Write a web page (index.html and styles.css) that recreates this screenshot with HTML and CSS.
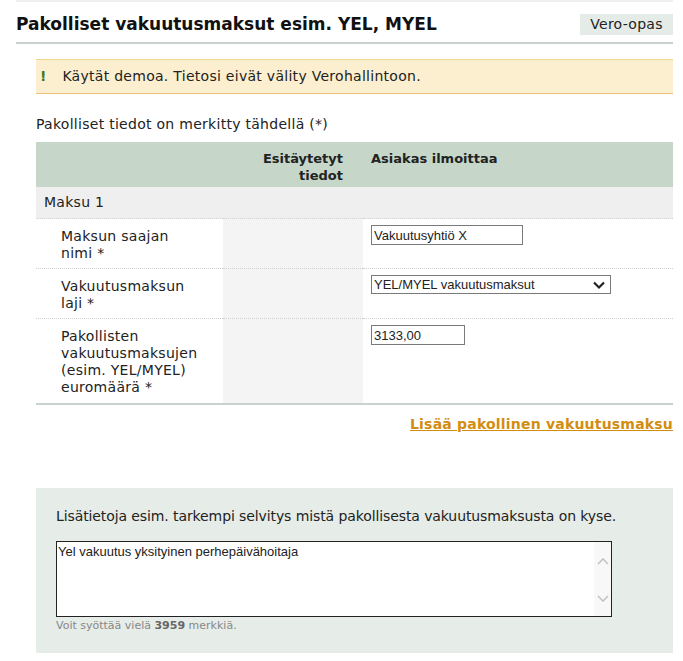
FILE: index.html
```html
<!DOCTYPE html>
<html lang="fi">
<head>
  <meta charset="UTF-8">
  <title>Pakolliset vakuutusmaksut</title>
  <link rel="stylesheet" href="styles.css">
</head>
<body>
  <div class="page">
    <div class="page-head">
      <h1>Pakolliset vakuutusmaksut esim. YEL, MYEL</h1>
      <a class="guide" href="#">Vero-opas</a>
    </div>

    <div class="content">
      <div class="notice"><span class="bang">!</span> Käytät demoa. Tietosi eivät välity Verohallintoon.</div>

      <p class="required-note">Pakolliset tiedot on merkitty tähdellä (*)</p>

      <table class="form-table">
        <colgroup>
          <col class="col-label">
          <col class="col-pre">
          <col class="col-own">
        </colgroup>
        <thead>
          <tr>
            <th></th>
            <th class="th-pre">Esitäytetyt tiedot</th>
            <th class="th-own">Asiakas ilmoittaa</th>
          </tr>
        </thead>
        <tbody>
          <tr class="group-row">
            <td colspan="3">Maksu 1</td>
          </tr>
          <tr class="field-row">
            <td class="label">Maksun saajan nimi *</td>
            <td class="pre"></td>
            <td class="own"><input class="text-input wide" type="text" value="Vakuutusyhtiö X"></td>
          </tr>
          <tr class="field-row">
            <td class="label">Vakuutusmaksun laji *</td>
            <td class="pre"></td>
            <td class="own">
              <div class="select-wrap">
                <select class="select-input">
                  <option>YEL/MYEL vakuutusmaksut</option>
                </select>
                <svg class="select-arrow" width="14" height="10" viewBox="0 0 14 10">
                  <path d="M2 2.5 L7 7.5 L12 2.5" fill="none" stroke="#222" stroke-width="2.2"/>
                </svg>
              </div>
            </td>
          </tr>
          <tr class="field-row last">
            <td class="label">Pakollisten vakuutusmaksujen (esim. YEL/MYEL) euromäärä *</td>
            <td class="pre"></td>
            <td class="own"><input class="text-input narrow" type="text" value="3133,00"></td>
          </tr>
        </tbody>
      </table>

      <div class="add-row">
        <a href="#" class="add-link">Lisää pakollinen vakuutusmaksu</a>
      </div>

      <div class="extra">
        <p class="extra-title">Lisätietoja esim. tarkempi selvitys mistä pakollisesta vakuutusmaksusta on kyse.</p>
        <div class="area-wrap">
          <textarea class="area">Yel vakuutus yksityinen perhepäivähoitaja</textarea>
          <span class="fake-scroll">
            <svg width="14" height="10" viewBox="0 0 14 10"><path d="M2 8 L7 3 L12 8" fill="none" stroke="#c4c4c4" stroke-width="1.6"/></svg>
            <svg width="14" height="10" viewBox="0 0 14 10"><path d="M2 2 L7 7 L12 2" fill="none" stroke="#c4c4c4" stroke-width="1.6"/></svg>
          </span>
        </div>
        <p class="counter">Voit syöttää vielä <strong>3959</strong> merkkiä.</p>
      </div>
    </div>
  </div>
</body>
</html>
```

FILE: styles.css
```css
body {
  margin: 0;
  font-family: "DejaVu Sans", Verdana, sans-serif;
  font-size: 13px;
  line-height: 17px;
  letter-spacing: 0.28px;
  color: #222;
  background: #fff;
}
.page {
  width: 657px;
  margin-left: 16px;
  border-top: 2px solid #f0f0f0;
}
.page-head {
  display: flex;
  justify-content: space-between;
  align-items: center;
  padding: 12px 0 7px;
  border-bottom: 2px solid #c9d2cf;
}
h1 {
  margin: 0;
  font-size: 17px;
  line-height: 21px;
  letter-spacing: 0;
  color: #111;
}
.guide {
  display: block;
  width: 93px;
  height: 21px;
  line-height: 21px;
  text-align: center;
  background: #e5ebe7;
  color: #222;
  font-size: 14px;
  text-decoration: none;
}
.content {
  margin-left: 20px;
}
.notice {
  margin-top: 15px;
  padding: 8px 4px;
  background: #fcefcf;
  border-top: 1px solid #f3d58f;
  border-bottom: 1px solid #eec27a;
  font-size: 14px;
}
.bang {
  color: #3b7a1c;
  font-weight: bold;
  margin-right: 11px;
}
.required-note {
  margin: 22px 0 9px;
  font-size: 14px;
}
.form-table {
  width: 637px;
  border-collapse: collapse;
  table-layout: fixed;
}
.col-label { width: 187px; }
.col-pre { width: 140px; }
.col-own { width: 310px; }
.form-table th {
  background: #c6d7c9;
  font-weight: bold;
  letter-spacing: 0;
  vertical-align: top;
  padding: 8px 8px 3px;
  height: 34px;
}
.th-pre {
  text-align: right;
  padding-right: 20px !important;
}
.th-own {
  text-align: left;
}
.group-row td {
  background: #efefef;
  padding: 7px 8px;
  font-size: 14px;
  border-bottom: 1px dotted #d2d2d2;
}
.field-row td {
  vertical-align: top;
  padding: 9px 0 6px;
  border-bottom: 1px dotted #cfcfcf;
  font-size: 14px;
}
.field-row.last td {
  border-bottom: 2px solid #c9d2cf;
  padding-bottom: 7px;
}
.field-row .label {
  padding-left: 25px;
  padding-right: 22px;
}
.field-row .pre {
  background: #f4f4f4;
}
.field-row .own {
  padding-left: 8px;
  padding-top: 6px;
}
.text-input {
  box-sizing: border-box;
  height: 20px;
  padding: 1px 2px;
  border: 1px solid #7a7a7a;
  font-family: "Liberation Sans", Arial, sans-serif;
  font-size: 13px;
  letter-spacing: 0;
  color: #222;
}
.wide { width: 152px; }
.narrow { width: 94px; }
.select-wrap {
  position: relative;
  width: 240px;
}
.select-input {
  appearance: none;
  -webkit-appearance: none;
  box-sizing: border-box;
  width: 240px;
  height: 19px;
  padding: 0 2px;
  border: 1px solid #7a7a7a;
  border-radius: 0;
  background: #fff;
  font-family: "Liberation Sans", Arial, sans-serif;
  font-size: 13px;
  letter-spacing: 0;
  color: #222;
}
.select-arrow {
  position: absolute;
  right: 5px;
  top: 5px;
  pointer-events: none;
}
.add-row {
  text-align: right;
  margin-top: 11px;
}
.add-link {
  color: #d38d0e;
  font-weight: bold;
  font-size: 14px;
  letter-spacing: 0.2px;
}
.extra {
  margin-top: 55px;
  padding: 20px 20px 20px;
  background: #e6ece7;
}
.extra-title {
  margin: 0 0 16px;
  font-size: 14px;
  letter-spacing: -0.1px;
}
.area-wrap {
  position: relative;
  width: 556px;
}
.area {
  display: block;
  box-sizing: border-box;
  width: 556px;
  height: 76px;
  padding: 2px 1px;
  border: 1px solid #222;
  border-radius: 0;
  resize: none;
  overflow: hidden;
  font-family: "Liberation Sans", Arial, sans-serif;
  font-size: 13px;
  letter-spacing: 0;
  color: #222;
}
.fake-scroll {
  position: absolute;
  top: 1px;
  right: 1px;
  bottom: 1px;
  width: 17px;
  background: #f8f8f8;
  display: flex;
  flex-direction: column;
  justify-content: space-between;
  align-items: center;
  padding: 14px 0 12px;
  box-sizing: border-box;
}
.counter {
  margin: 2px 0 0;
  font-size: 11px;
  line-height: 14px;
  letter-spacing: 0;
  color: #888;
}
.counter strong {
  color: #666;
}
```
